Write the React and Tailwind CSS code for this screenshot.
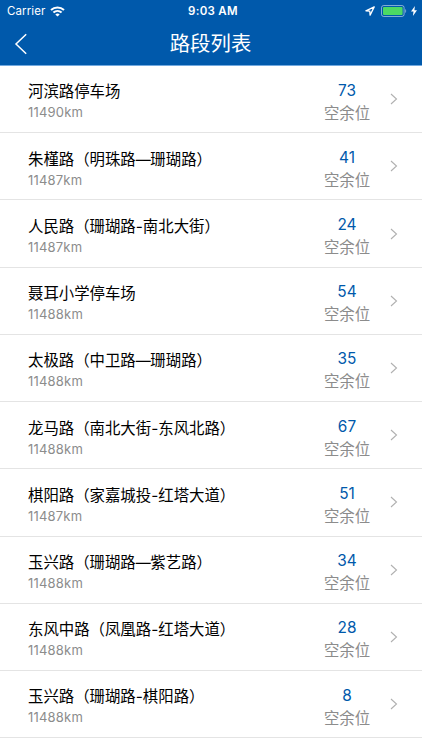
const roads = [
  { name: '河滨路停车场', distance: '11490km', free: 73 },
  { name: '朱槿路（明珠路—珊瑚路）', distance: '11487km', free: 41 },
  { name: '人民路（珊瑚路-南北大街）', distance: '11487km', free: 24 },
  { name: '聂耳小学停车场', distance: '11488km', free: 54 },
  { name: '太极路（中卫路—珊瑚路）', distance: '11488km', free: 35 },
  { name: '龙马路（南北大街-东风北路）', distance: '11488km', free: 67 },
  { name: '棋阳路（家嘉城投-红塔大道）', distance: '11487km', free: 51 },
  { name: '玉兴路（珊瑚路—紫艺路）', distance: '11488km', free: 34 },
  { name: '东风中路（凤凰路-红塔大道）', distance: '11488km', free: 28 },
  { name: '玉兴路（珊瑚路-棋阳路）', distance: '11488km', free: 8 },
];

function WifiIcon() {
  return (
    <svg width="15" height="11" viewBox="0 0 15 11" fill="none" stroke="currentColor" strokeWidth="2">
      <path d="M1 4.1C4.7.6 10.3.6 14 4.1" />
      <path d="M3.4 6.6c2.4-2.2 5.8-2.2 8.2 0" />
      <path d="M7.5 10.6 5.3 8.4c1.3-1.1 3.1-1.1 4.4 0z" fill="currentColor" stroke="none" />
    </svg>
  );
}

function StatusBar() {
  return (
    <div className="grid h-[22px] grid-cols-3 items-center pl-[7px] pr-[5px] text-[11.5px] leading-[22px]">
      <div className="flex items-center gap-[5px]">
        <span className="tracking-[0.1px]">Carrier</span>
        <WifiIcon />
      </div>
      <div className="pl-[2px] text-center text-[11.5px] font-semibold tracking-[0.3px]">9:03 AM</div>
      <div className="flex items-center justify-end">
        <svg width="10" height="10" viewBox="0 0 10 10" fill="none" stroke="currentColor" strokeWidth="1.3" strokeLinejoin="round">
          <path d="M9.2.9.9 4.8l3.9.4.3 4z" />
        </svg>
        <svg className="ml-[6px]" width="26" height="12" viewBox="0 0 26 12">
          <rect x=".5" y=".5" width="22.6" height="11" rx="2.2" fill="none" stroke="#fff" strokeOpacity=".5" />
          <rect x="2" y="2" width="19.6" height="8" rx="1" fill="#4cd964" />
          <path d="M24.2 4v4c1.3-.5 1.3-3.5 0-4z" fill="#fff" fillOpacity=".5" />
        </svg>
        <svg className="ml-[4px]" width="6" height="10" viewBox="0 0 6 10" fill="currentColor">
          <path d="M3.9 0 0 5.6h2.5L1.9 10 6 4.2H3.4z" />
        </svg>
      </div>
    </div>
  );
}

// dashes use the wider Latin glyphs
function RoadName({ name }) {
  return (
    <div className="h-[24px] font-['Noto_Sans_CJK_SC',sans-serif] text-[15.4px] leading-[24px] text-black">
      {name.split(/([-—])/).map((part, i) => {
        if (part === '-') return <span key={i} className="font-['Inter',sans-serif] leading-none">-</span>;
        if (part === '—') {
          return <span key={i} className="-mr-[0.4px] font-['Inter',sans-serif] text-[15px] leading-none">—</span>;
        }
        return part;
      })}
    </div>
  );
}

function RoadRow({ name, distance, free }) {
  return (
    <li className="flex h-[67.22px] items-center border-b border-[#e4e4e4] pl-7 pr-[24px]">
      <div className="flex-1 pt-[2.6px]">
        <RoadName name={name} />
        <div className="text-[13px] leading-[20px] tracking-[0.2px] text-[#8c8c8c]">{distance}</div>
      </div>
      <div className="w-[60px] pt-[6px] text-center">
        <div className="text-[15.4px] leading-[23px] text-[#0059ab]">{free}</div>
        <div className="text-[15.4px] leading-[24px] text-[#8c8c8c]">空余位</div>
      </div>
      <svg className="ml-[13px]" width="8" height="12" viewBox="0 0 8 12" fill="none" stroke="#b0b0b0" strokeWidth="1.1">
        <path d="m1 1 5.5 5L1 11" />
      </svg>
    </li>
  );
}

export default function App() {
  return (
    <div className="h-[750px] overflow-hidden bg-white font-['Inter','Noto_Sans_CJK_SC',sans-serif]">
      <header className="h-[66px] border-b border-[#72a9df] bg-[#0059ab] text-white">
        <StatusBar />
        <div className="grid h-[43px] grid-cols-[1fr_auto_1fr] items-center pr-[1px]">
          <button className="ml-[14px] w-[14px]">
            <svg width="14" height="22" viewBox="0 0 14 22" fill="none" stroke="currentColor" strokeWidth="1.5">
              <path d="M12.2 1.3 2 11l10.2 9.7" />
            </svg>
          </button>
          <h1 className="text-[20.4px] leading-[43px]">路段列表</h1>
        </div>
      </header>
      <ul>
        {roads.map((road) => (
          <RoadRow key={road.name} {...road} />
        ))}
      </ul>
    </div>
  );
}
